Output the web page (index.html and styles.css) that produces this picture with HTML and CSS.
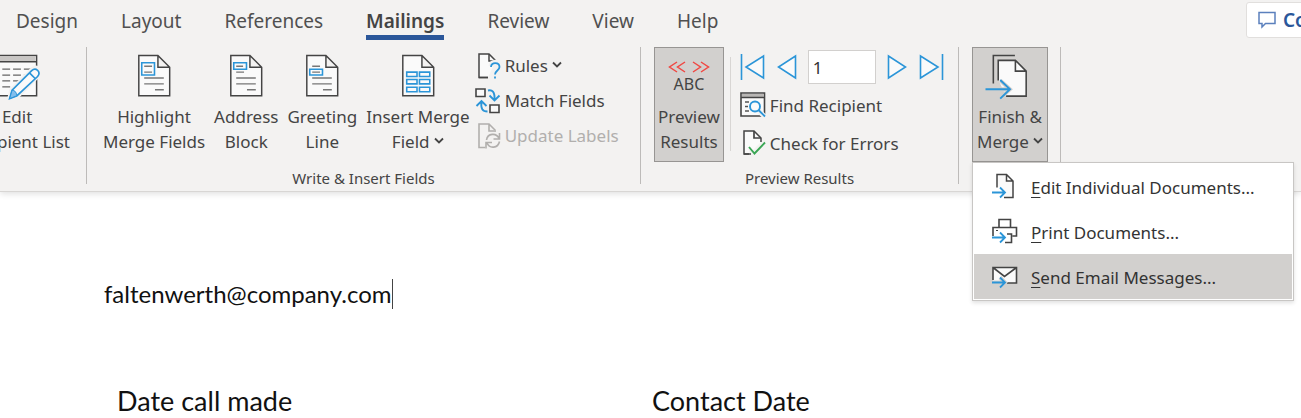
FILE: index.html
```html
<!DOCTYPE html>
<html lang="en">
<head>
<meta charset="utf-8">
<title>Mailings</title>
<link rel="stylesheet" href="styles.css">
</head>
<body>
<header class="ribbon">
  <div class="topbar">
    <nav class="tabs">
      <a href="#design">Design</a>
      <a href="#layout">Layout</a>
      <a href="#references">References</a>
      <a href="#mailings" class="active">Mailings</a>
      <a href="#review">Review</a>
      <a href="#view">View</a>
      <a href="#help">Help</a>
    </nav>
    <div class="comments-slot">
      <button class="comments" type="button">
        <svg width="18" height="18" viewBox="0 0 18 18"><path d="M1 1.500h16v11H7.500l-3.500 3.500v-3.500H1z" fill="none" stroke="#5b80bd" stroke-width="1.500"/></svg>
        <span>Comments</span>
      </button>
    </div>
  </div>
  <div class="groups">
    <section class="group start">
      <div class="tools">
        <button class="big" type="button">
          <svg class="icon" width="48" height="51" viewBox="0 0 48 51">
            <path d="M-3 1.500h47v41H-3z" fill="#fafafa" stroke="#444" stroke-width="1.500"/>
            <path d="M-3 2h46v6H-3z" fill="#c8c6c4"/><path d="M-3 8h47" stroke="#444" stroke-width="1.500"/>
            <path d="M9 15.500h8m3 0h8m3 0h8M9 21.500h8m3 0h8m3 0h5M9 27.500h8m3 0h8M9 33.500h8" stroke="#666" stroke-width="1.300"/>
            <path d="M16 46l2-9 21-21a4.500 4.500 0 0 1 8 5L25 43z" fill="#f3f2f1" stroke="#f3f2f1" stroke-width="4"/>
            <path d="M16.500 45.500l2.500-8.500 20-20c4-4 10 1 6 6L24 42.500zM37 19.500l5.500 5.500" fill="#fafafa" stroke="#2b95d8" stroke-width="1.700"/><path d="M16.500 45.500l2.500-8.500q4 0 5 5.500z" fill="#83beec" stroke="#2b95d8"/>
          </svg>
          <span>Edit<br>Recipient List</span>
        </button>
      </div>
    </section>

    <section class="group write">
      <div class="tools">
        <button class="big" type="button">
          <svg class="icon" width="48" height="51" viewBox="0 0 48 51">
            <path class="doc" d="M8.500 1.500h19.500l12 12v29h-31.500zM28 1.500v12h12"/>
            <path class="lines" d="M14 24.500h20M14 30.500h20M25 36.500h9M14 12.500h8M14 18.500h8"/>
            <path class="blue" d="M11.500 9h13v12.500h-13z"/>
          </svg>
          <span>Highlight<br>Merge Fields</span>
        </button>
        <button class="big" type="button">
          <svg class="icon" width="48" height="51" viewBox="0 0 48 51">
            <path class="doc" d="M8.500 1.500h19.500l12 12v29h-31.500zM28 1.500v12h12"/>
            <path class="lines" d="M14 24.500h20M14 30.500h20M25 36.500h9M14 12.500h7M14 18.500h8"/>
            <path class="blue" d="M11.500 9h13v6.500h-13z"/>
          </svg>
          <span>Address<br>Block</span>
        </button>
        <button class="big" type="button">
          <svg class="icon" width="48" height="51" viewBox="0 0 48 51">
            <path class="doc" d="M8.500 1.500h19.500l12 12v29h-31.500zM28 1.500v12h12"/>
            <path class="lines" d="M14 24.500h20M14 30.500h20M25 36.500h9M14 12.500h8M14 18.500h8"/>
            <path class="blue" d="M11.500 15.500h13v6h-13z"/>
          </svg>
          <span>Greeting<br>Line</span>
        </button>
        <button class="big" type="button">
          <svg class="icon" width="48" height="51" viewBox="0 0 48 51">
            <path class="doc" d="M8.500 1.500h19.500l12 12v29h-31.500zM28 1.500v12h12"/>
            <path class="blue" d="M12.500 18.500h10.500v4.500h-10.500zM25.500 18.500h10.500v4.500h-10.500zM12.500 26h10.500v4.500h-10.500zM25.500 26h10.500v4.500h-10.500zM12.500 34h10.500v4.500h-10.500zM25.500 34h10.500v4.500h-10.500z"/>
          </svg>
          <span>Insert Merge<br>Field <svg class="chev" width="10" height="8" viewBox="0 0 10 8"><path d="M1 1.500l4 4 4-4"/></svg></span>
        </button>
        <div class="stack">
          <button class="small" type="button">
            <svg width="26" height="28" viewBox="0 0 26 28">
              <path class="doc" d="M13 25.500H4V2h10l6 6v2" /><path d="M4 25.500h9M14 2v7h5" fill="none" stroke="#444" stroke-width="1.500"/>
              <path d="M16 14c0-5 8-5 8 0 0 4-4 3.500-4 8M20 24v2.500" fill="none" stroke="#f3f2f1" stroke-width="5"/>
              <path d="M16 15c0-5.500 8.500-5 8.500 0 0 3.500-4.500 3.500-4.500 7.500M20 24.500v2" fill="none" stroke="#2b95d8" stroke-width="1.800"/>
            </svg>
            <span>Rules <svg class="chev" width="10" height="8" viewBox="0 0 10 8"><path d="M1 1.500l4 4 4-4"/></svg></span>
          </button>
          <button class="small" type="button">
            <svg width="26" height="28" viewBox="0 0 26 28">
              <path d="M1 2h9v7.500H1zM15 18h9v7.500h-9z" fill="#fafafa" stroke="#444" stroke-width="1.600"/>
              <path d="M13 3.500c4-1 7 1 6.500 9.500M14.500 8.500l5 5 5-5M12.500 24.500c-5 0-7-3-6-9.500M1.500 19l5-5 5 5" fill="none" stroke="#2b95d8" stroke-width="1.900"/>
            </svg>
            <span>Match Fields</span>
          </button>
          <button class="small" type="button" disabled>
            <svg width="26" height="28" viewBox="0 0 26 28">
              <path d="M10 25.500H4V2h10l6 6v2M14 2v7h5" fill="none" stroke="#b1afad" stroke-width="1.600"/>
              <path d="M11.500 18c1-7 10-7.500 12.500-1.500M24.500 11v6h-6M24.500 19.500c-1.500 7-10 7.500-12.500 1.500M11 26.500v-6h6" fill="none" stroke="#b1afad" stroke-width="1.600"/>
            </svg>
            <span>Update Labels</span>
          </button>
        </div>
      </div>
      <h2>Write &amp; Insert Fields</h2>
    </section>

    <section class="group preview">
      <div class="tools">
        <button class="big pressed" type="button" aria-pressed="true">
          <span class="icon abc">
            <svg width="42" height="12" viewBox="0 0 42 12"><path d="M9 1L1.500 6 9 11M17 1L9.500 6 17 11M25 1l7.500 5L25 11M33 1l7.500 5L33 11" fill="none" stroke="#f04843" stroke-width="1.500"/></svg>
            <span>ABC</span>
          </span>
          <span>Preview<br>Results</span>
        </button>
        <div class="rule"></div>
        <div class="stack">
          <div class="records">
            <button type="button" aria-label="First record"><svg width="25" height="26" viewBox="0 0 25 26"><path class="tri" d="M1.500 0v26M23.500 2v22L6 13z"/></svg></button>
            <button type="button" aria-label="Previous record"><svg width="20" height="26" viewBox="0 0 20 26"><path class="tri" d="M18.500 2v22L1.500 13z"/></svg></button>
            <input type="text" value="1" aria-label="Record number">
            <button type="button" aria-label="Next record"><svg width="20" height="26" viewBox="0 0 20 26"><path class="tri" d="M1.500 2v22L18.500 13z"/></svg></button>
            <button type="button" aria-label="Last record"><svg width="25" height="26" viewBox="0 0 25 26"><path class="tri" d="M23.500 0v26M1.500 2v22L19 13z"/></svg></button>
          </div>
          <button class="small" type="button">
            <svg width="26" height="28" viewBox="0 0 26 28">
              <path d="M1 2h23.500v23H1z" fill="#fafafa" stroke="#444" stroke-width="1.600"/><path d="M2 3h22v3H2z" fill="#b8b6b4"/><path d="M1 6.500h23" stroke="#444" stroke-width="1.500"/>
              <path d="M5 11h4M5 15.500h3M5 20h4" stroke="#555" stroke-width="1.500"/>
              <path d="M18 19l8 8" stroke="#f3f2f1" stroke-width="5"/>
              <circle cx="15" cy="15.500" r="5" fill="#fafafa" stroke="#2b95d8" stroke-width="1.900"/><path d="M18.500 19l6.500 6.500" stroke="#2b95d8" stroke-width="1.900"/>
            </svg>
            <span>Find Recipient</span>
          </button>
          <button class="small" type="button">
            <svg width="26" height="28" viewBox="0 0 26 28">
              <path class="doc" d="M9 25H4V2h10l7 7v4"/><path d="M14 2v7h7" fill="none" stroke="#444" stroke-width="1.700"/>
              <path d="M8 18.500l6 6.500L25 14v10l-9 4h-5z" fill="#f3f2f1"/>
              <path d="M4 25h7" stroke="#444" stroke-width="1.500"/>
              <path d="M9 18l5.500 6.500L25 13.500" fill="none" stroke="#3aa655" stroke-width="1.900"/>
            </svg>
            <span>Check for Errors</span>
          </button>
        </div>
      </div>
      <h2>Preview Results</h2>
    </section>

    <section class="group finish">
      <div class="tools">
        <div class="dropdown">
          <button class="big pressed" type="button" aria-expanded="true">
            <svg class="icon" width="48" height="51" viewBox="0 0 48 51">
              <path d="M7 30V1.500h22" fill="none" stroke="#444" stroke-width="1.600"/>
              <path d="M12 6.500h17.500l11 11v25.500H20L12 26z" fill="#fafafa"/>
              <path d="M12 27V6.500h17.500l11 11v25.500H20M29.500 6.500v11h11" fill="none" stroke="#444" stroke-width="1.600"/>
              <path d="M0 36h24M14 27l10 9-10 9" fill="none" stroke="#d2d0ce" stroke-width="4"/>
              <path d="M-1 36h25M14 26.500l10 9.500-10 9.500" fill="none" stroke="#2b95d8" stroke-width="1.900"/>
            </svg>
            <span>Finish &amp;<br>Merge <svg class="chev" width="10" height="8" viewBox="0 0 10 8"><path d="M1 1.500l4 4 4-4"/></svg></span>
          </button>
          <div class="menu" role="menu">
            <button type="button" role="menuitem">
              <svg width="26" height="28" viewBox="0 0 26 28">
                <path class="doc" d="M5 16V1.500h9.500l6.500 6.500V24.500h-9M14.500 1.500V8H21"/><path d="M0 14.500h8l5 5-5 5H0z" fill="#fff"/>
                <path d="M0 19.500h13M8 14.500l5 5-5 5" fill="none" stroke="#2b95d8" stroke-width="1.800"/>
              </svg>
              <span><u>E</u>dit Individual Documents...</span>
            </button>
            <button type="button" role="menuitem">
              <svg width="26" height="28" viewBox="0 0 26 28">
                <path d="M7 9V1.500h11.500V9M1 18V9.500h23.500V18h-4M15 16h4.500v8.500H13" fill="none" stroke="#444" stroke-width="1.600"/><path d="M4 12.500h2" stroke="#444"/>
                <path d="M0 19.500h13M8 14.500l5 5-5 5" fill="none" stroke="#2b95d8" stroke-width="1.800"/>
              </svg>
              <span><u>P</u>rint Documents...</span>
            </button>
            <button type="button" role="menuitem" class="current">
              <svg width="26" height="28" viewBox="0 0 26 28">
                <path d="M1 18V4.500h23.500V20H15" fill="#fafafa"/><path d="M1 17V4.500h23.500V20H15M1 4.500l11.500 9 12-9" fill="none" stroke="#444" stroke-width="1.600"/>
                <path d="M0 19.500h13M8 14.500l5 5-5 5" fill="none" stroke="#d2d0ce" stroke-width="4"/>
                <path d="M0 19.500h13M8 14.500l5 5-5 5" fill="none" stroke="#2b95d8" stroke-width="1.800"/>
              </svg>
              <span><u>S</u>end Email Messages...</span>
            </button>
          </div>
        </div>
      </div>
    </section>
  </div>
</header>
<main class="document">
  <p class="email">faltenwerth@company.com<span class="caret"></span></p>
  <div class="fields">
    <p>Date call made</p>
    <p>Contact Date</p>
  </div>
</main>
</body>
</html>
```

FILE: styles.css
```css
* { box-sizing: border-box; }
body {
  margin: 0;
  background: #fff;
  color: #444;
  font: 17px/25px "Noto Sans", "Open Sans", sans-serif;
  overflow: hidden;
}
button {
  font: inherit;
  color: inherit;
  background: none;
  border: 1px solid transparent;
  padding: 0;
  white-space: nowrap;
}
svg { flex: none; overflow: visible; }

.ribbon {
  background: #f3f2f1;
  border-bottom: 1px solid #d8d6d4;
  box-shadow: 0 2px 6px rgba(0, 0, 0, 0.12);
  padding-bottom: 7px;
}
.topbar {
  display: flex;
  justify-content: space-between;
  height: 47px;
}
.tabs {
  display: flex;
  gap: 43px;
  padding: 9px 0 0 16px;
  font-size: 19px;
}
.tabs a {
  color: #505050;
  text-decoration: none;
  height: 31px;
}
.tabs .active {
  font-weight: 600;
  color: #444;
  border-bottom: 5px solid #2b579a;
}
.comments-slot {
  width: 55px;
  overflow: hidden;
  padding-top: 2px;
}
.comments {
  display: flex;
  align-items: center;
  gap: 7px;
  height: 36px;
  padding: 0 11px;
  background: #fff;
  border-color: #e1dfdd;
  border-radius: 3px;
  color: #2b579a;
  font-size: 19px;
  font-weight: 600;
}

.groups { display: flex; }
.group {
  border-right: 1px solid #bdbbb9;
  height: 137px;
  display: flex;
  flex-direction: column;
  justify-content: space-between;
}
.group h2 {
  margin: 0;
  font-size: 15px;
  font-weight: 400;
  line-height: 12px;
  text-align: center;
}
.tools { display: flex; }
.start {
  width: 87px;
  overflow: hidden;
}
.start .tools { justify-content: flex-end; padding-right: 12px; }
.write { padding: 0 15px; width: 554px; }
.write .tools { gap: 7px; }
.preview { padding: 0 13px; width: 318px; }
.finish { padding: 0 12px 0 13px; }

.big {
  display: flex;
  flex-direction: column;
  align-items: center;
  height: 115px;
  padding: 6px 3px 0;
  text-align: center;
}
.write .big { padding: 6px 0 0; }
.finish .big { padding: 6px 4px 0; }
.icon { height: 50px; }
.pressed {
  background: #d2d0ce;
  border-color: #979593;
}
.abc {
  display: flex;
  flex-direction: column;
  align-items: center;
  padding-top: 7px;
  font-size: 16px;
  line-height: 23px;
}
.doc { fill: #fafafa; stroke: #444; stroke-width: 1.5; }
.lines { fill: none; stroke: #777; stroke-width: 1.4; }
.blue { fill: none; stroke: #2b95d8; stroke-width: 1.6; }
.tri { fill: #fafafa; stroke: #2b95d8; stroke-width: 1.6; }
.chev { vertical-align: 3px; }
.chev path { fill: none; stroke: #444; stroke-width: 1.8; }

.stack { padding-top: 1px; }
.write .stack { margin-left: -4px; }
.small {
  display: flex;
  align-items: center;
  gap: 4px;
  height: 35px;
}
.small:disabled { color: #b1afad; }
.rule {
  width: 1px;
  height: 94px;
  margin: 10px 8px 0 6px;
  background: #d8d6d4;
}
.preview .small, .records { height: 38px; }
.records {
  display: flex;
  align-items: center;
  gap: 10px;
}
.records button { display: flex; }
.records input {
  width: 68px;
  height: 34px;
  padding: 0 4px;
  border: 1px solid #d2d0ce;
  background: #fff;
  color: #333;
  font: inherit;
}

.dropdown { position: relative; }
.menu {
  position: absolute;
  top: 115px;
  left: 0;
  z-index: 1;
  width: 322px;
  padding: 1px;
  background: #fff;
  border: 1px solid #c8c6c4;
  box-shadow: 0 2px 4px rgba(0, 0, 0, 0.12);
}
.menu button {
  display: flex;
  align-items: center;
  gap: 13px;
  width: 100%;
  height: 45px;
  padding: 1px 0 0 17px;
  color: #333;
}
.menu .current { background: #d2d0ce; }
.menu u { text-underline-offset: 3px; text-decoration-thickness: 1px; }

.document {
  color: #111;
  font-family: Lato, sans-serif;
}
.document p { margin: 0; }
.email {
  display: flex;
  align-items: center;
  padding: 87px 0 0 104px;
  font-size: 24px;
  line-height: 30px;
}
.caret {
  width: 1px;
  height: 30px;
  background: #444;
}
.fields {
  display: grid;
  grid-template-columns: 535px 1fr;
  padding: 76px 0 0 117px;
  font-size: 27px;
  line-height: 32px;
}
```
